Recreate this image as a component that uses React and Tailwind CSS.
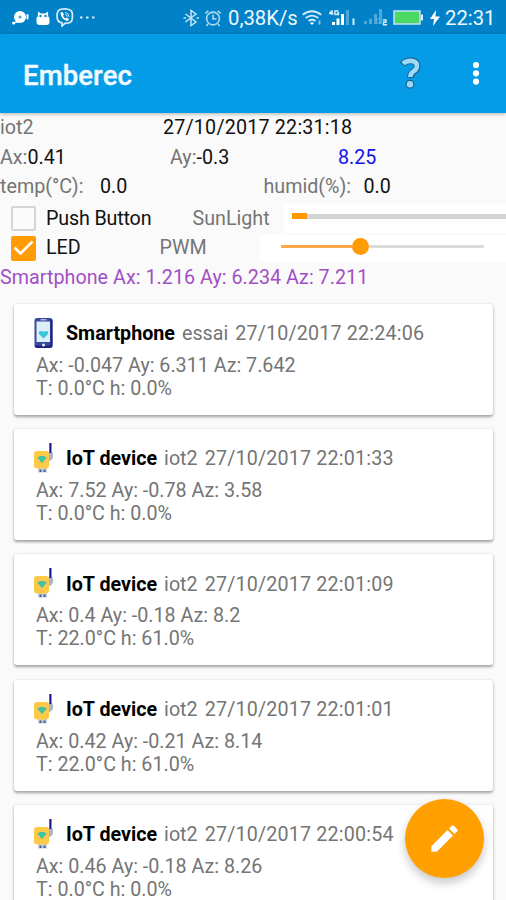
import { MdEdit } from "react-icons/md";

const records = [
  { id: 1, type: "phone", name: "Smartphone", source: "essai", date: "27/10/2017 22:24:06", accel: "Ax: -0.047 Ay: 6.311 Az: 7.642", climate: "T: 0.0°C h: 0.0%" },
  { id: 2, type: "iot", name: "IoT device", source: "iot2", date: "27/10/2017 22:01:33", accel: "Ax: 7.52 Ay: -0.78 Az: 3.58", climate: "T: 0.0°C h: 0.0%" },
  { id: 3, type: "iot", name: "IoT device", source: "iot2", date: "27/10/2017 22:01:09", accel: "Ax: 0.4 Ay: -0.18 Az: 8.2", climate: "T: 22.0°C h: 61.0%" },
  { id: 4, type: "iot", name: "IoT device", source: "iot2", date: "27/10/2017 22:01:01", accel: "Ax: 0.42 Ay: -0.21 Az: 8.14", climate: "T: 22.0°C h: 61.0%" },
  { id: 5, type: "iot", name: "IoT device", source: "iot2", date: "27/10/2017 22:00:54", accel: "Ax: 0.46 Ay: -0.18 Az: 8.26", climate: "T: 0.0°C h: 0.0%" },
];

function PhoneIcon() {
  return (
    <svg width="20" height="32" viewBox="0 0 20 32">
      <rect x="0.5" y="1" width="18" height="30" rx="2.5" fill="#3a4a9c" />
      <path d="M16.500 2q2 0 2 2v24q0 3-3 3h-12q-2 0-2.500-2.500h15.500z" fill="#1c2384" />
      <rect x="2.500" y="4.500" width="13.500" height="20.500" fill="#dceef7" />
      <path d="M9.500 21.500 5 17q-1-3 2-3 1.800 0 2.500 1 .7-1 2.500-1 3 0 2 3z" fill="#3cc6da" />
      <path d="M6.500 2.800h6" stroke="#c3cdec" strokeWidth="1.200" />
      <circle cx="9.500" cy="28" r="1.500" fill="#dfe8ff" />
    </svg>
  );
}

function DeviceIcon() {
  return (
    <svg width="20" height="32" viewBox="0 0 20 32">
      <path d="M14 10.500h4.500q1 2 .5 4.500-.5 3-5 4.500z" fill="#a9b4c4" />
      <rect x="15.300" y="1" width="2.200" height="10" fill="#1a1a8c" />
      <path d="M4 25h9v5.500H4z" fill="#c6d0de" />
      <path d="M5.500 27.500h2v2.500h-2zM9.500 27.500h2v2.500h-2z" fill="#4a5f96" />
      <rect x="0" y="9" width="15" height="17.500" rx="3" fill="#fdc947" />
      <path d="M3.200 15.500q4.800-3.700 9.600 0L8 21.300z" fill="#45c0a2" />
    </svg>
  );
}

/* Status bar glyphs */
function ChatIcon() {
  return (
    <svg width="18" height="16" viewBox="0 0 18 16" fill="#fff">
      <circle cx="8" cy="7" r="6" />
      <circle cx="1.700" cy="13" r="1.600" />
      <path d="M4 9.500 3 13l4-.5z" />
      <rect x="14.500" y="4" width="2" height="5.500" rx="1" />
      <circle cx="8" cy="7" r="1.500" fill="#4ba4da" />
    </svg>
  );
}

function RobotIcon() {
  return (
    <svg width="14" height="16" viewBox="0 0 14 16" fill="#fff">
      <path d="M1.800 6 2 1.500 5 3.500h4L12 1.500 12.200 6z" />
      <rect x="0.500" y="6" width="13" height="9" rx="3" />
      <circle cx="4.500" cy="6" r="1.200" fill="#0a82c8" />
      <circle cx="9.500" cy="6" r="1.200" fill="#0a82c8" />
    </svg>
  );
}

function ViberIcon() {
  return (
    <svg width="19" height="19" viewBox="0 0 19 19" fill="none" stroke="#d5ecf9">
      <path d="M5 1.500q4.500-1.200 9 0 3 .8 3.300 4 .4 3.500-.3 6.500-.8 2.700-4 3l-3 .3L7 18v-3.200q-3.700-.5-4.500-3.300-.8-3-.2-6Q2.700 2.300 5 1.500z" strokeWidth="1.700" />
      <path d="M5.500 4.500q0 6.500 7 8.700l1.700-1.900-2.500-1.700-1.200.9Q8.700 9.500 8 7.700l1-1.100L7.500 4z" fill="#fff" stroke="none" />
      <path d="M10 4.500q3.700.4 4 4.300M10.300 6.500q1.600.3 1.800 2.200" strokeWidth="1" />
    </svg>
  );
}

function AlarmIcon() {
  return (
    <svg width="18" height="18" viewBox="0 0 18 18" fill="none" stroke="#b0d8ef" strokeWidth="1.600">
      <circle cx="9" cy="9.500" r="6.400" />
      <path d="M9 5.500V10h3.500M1.300 4.500l3-2.700M16.700 4.500l-3-2.700M4 15l-1.500 2M14 15l1.500 2" />
    </svg>
  );
}

function WifiIcon() {
  return (
    <svg width="21" height="16" viewBox="0 0 21 16" fill="none" stroke="#d5ecf9" strokeWidth="1.900">
      <path d="M.8 4.800q9-7 18.400 0M3.700 8q6.300-4.700 12.600 0M6.500 11q3.500-2.500 7 0" />
      <path d="M8 13q2-1.400 4 0l-2 2z" fill="#fff" stroke="none" />
      <path d="M17.500 10.500v4" strokeWidth="2" stroke="#84c1e4" />
    </svg>
  );
}

function SignalIcon() {
  return (
    <svg width="27" height="16" viewBox="0 0 27 16">
      <path d="M.500 3 3 .800V5M0 3.500h4.500M9.500 1H6v3.500h3.500V3H8" fill="none" stroke="#d5ecf9" strokeWidth="1.400" />
      <path d="M3 12h3v3H3zM7.500 8.500h3V15h-3zM12 4h3v11h-3z" fill="#fff" />
      <path d="M17 0h3v15h-3z" fill="#4fa7d9" />
      <path d="M23.500 8.500h2V15h-2z" fill="#d5ecf9" />
    </svg>
  );
}

function WeakSignalIcon() {
  return (
    <svg width="24" height="17" viewBox="0 0 24 17">
      <path d="M0 12h3v3H0zM5 9.500h3V15H5zM10 5h3v10h-3zM15 0h3v15h-3z" fill="#4fa7d9" />
      <path d="M16.500 10h-4v4h3.500v-2" fill="none" stroke="#65b3de" />
      <path d="M18.800 11h3.200v2.300h-2.500v2.500h3.500" fill="none" stroke="#d5ecf9" strokeWidth="1.400" />
    </svg>
  );
}

function StatusBar() {
  return (
    <div className="flex h-[33.5px] items-center bg-[#0182c8] pt-0.5 pl-3 text-[20.3px] text-[#eef8fe]">
      <ChatIcon />
      <span className="ml-[6px]"><RobotIcon /></span>
      <span className="ml-[5px]"><ViberIcon /></span>
      <svg className="ml-[6px]" width="15" height="3" viewBox="0 0 15 3" fill="#d5ecf9">
        <path d="M0 .5h2.500v2H0zM6 .5h2.500v2H6zM12 .5h2.500v2H12z" />
      </svg>
      <svg className="ml-[88px]" width="16" height="18" viewBox="0 0 16 18" fill="none" stroke="#c6e4f5" strokeWidth="1.500">
        <path d="m2.500 5 10.500 8L8 16.500v-15L13 5 2.500 13M.500 9H3M13.500 9H16" />
      </svg>
      <span className="ml-[5px]"><AlarmIcon /></span>
      <span className="ml-[6px] w-[70px] whitespace-nowrap">0,38K/s</span>
      <span className="ml-[4px]"><WifiIcon /></span>
      <span className="ml-[6px]"><SignalIcon /></span>
      <span className="ml-[8px]"><WeakSignalIcon /></span>
      <svg className="ml-[5px]" width="31" height="15" viewBox="0 0 31 15">
        <rect x="1" y="1" width="26" height="13" fill="#4bd964" stroke="#b9dff3" strokeWidth="1.600" />
        <path d="M28 4.500h2v6h-2z" fill="#d5ecf9" />
      </svg>
      <svg className="ml-[6px]" width="10" height="16" viewBox="0 0 10 16" fill="#fff">
        <path d="M6 0 0 9h4l-1 7 7-9.500H5.500z" />
      </svg>
      <span className="ml-[5px] whitespace-nowrap">22:31</span>
    </div>
  );
}

function AppBar() {
  return (
    <header className="relative z-10 flex h-[79.5px] items-center bg-[#049ce6] pl-[23px] shadow-[0_1px_4px_rgba(0,0,0,0.3)]">
      <h1 className="flex-1 pt-[4px] text-[27.5px] font-medium tracking-[0.1px] text-[#f2faff] [-webkit-text-stroke:0.4px_#f2faff]">Emberec</h1>
      <svg width="22" height="34" viewBox="0 0 22 34" fill="none">
        <path d="M2.500 8.500Q5 4.800 10.500 4.800 17.200 4.800 17.200 10.200q0 3-3.500 5.300-3.200 2.300-3.400 6.300" stroke="#1f5f88" strokeWidth="6.600" />
        <path d="M3.200 7.800Q5.500 4.900 10.500 4.900 17 4.900 17 10.200q0 2.800-3.500 5.100-3.200 2.200-3.200 5.700" stroke="#9bd9fa" strokeWidth="4.600" />
        <circle cx="10" cy="28.300" r="3.900" fill="#9bd9fa" stroke="#1f5f88" strokeWidth="1.200" />
      </svg>
      <svg className="mr-[26px] ml-[50px]" width="8" height="24" viewBox="0 0 8 24" fill="#fff">
        <circle cx="4" cy="4" r="3.100" />
        <circle cx="4" cy="12.300" r="3.100" />
        <circle cx="4" cy="20.600" r="3.100" />
      </svg>
    </header>
  );
}

function Readings() {
  return (
    <section className="text-[19.7px] leading-[29.6px] whitespace-nowrap text-[#111]">
      <div className="flex h-[29.6px]">
        <span className="w-[163px] text-[#757575]">iot2</span>
        <span className="tracking-[0.2px]">27/10/2017 22:31:18</span>
      </div>
      <div className="flex h-[29.6px]">
        <span className="w-[170px]"><span className="text-[#757575]">Ax:</span>0.41</span>
        <span className="w-[168px]"><span className="text-[#757575]">Ay:</span>-0.3</span>
        <span className="text-[#1414e6]">8.25</span>
      </div>
      <div className="flex h-[29.6px]">
        <span className="w-[100px] text-[#757575]">temp(°C):</span>
        <span className="w-[163.5px]">0.0</span>
        <span className="w-[100px] text-[#757575]">humid(%):</span>
        <span>0.0</span>
      </div>
      <div className="mt-[2px] flex h-[29.6px] items-center">
        <span className="ml-[11px] size-[25px] rounded-[2px] border-2 border-[#d5d5d5]" />
        <span className="ml-[10px] w-[146.5px] tracking-[-0.15px]">Push Button</span>
        <span className="w-[91.5px] text-[#757575]">SunLight</span>
        <span className="flex h-[29px] flex-1 items-center bg-white pb-[5px]">
          <span className="ml-[8px] h-[6px] w-[15px] bg-[#ff9800]" />
          <span className="h-[5px] flex-1 bg-[#d3d3d3]" />
        </span>
      </div>
      <div className="flex h-[29.6px] items-center">
        <span className="ml-[11px] flex size-[25px] items-center justify-center rounded-[2px] bg-[#ff9b05]">
          <svg width="21" height="18" viewBox="0 0 21 18" fill="none" stroke="#fff" strokeWidth="2.600">
            <path d="m1.500 8.500 6 6L19.500 2.500" />
          </svg>
        </span>
        <span className="ml-[10px] w-[113.5px]">LED</span>
        <span className="w-[100.500px] text-[#757575]">PWM</span>
        <span className="flex h-[27px] flex-1 items-center bg-white pb-[3px]">
          <span className="ml-[21px] h-[3px] w-[71px] bg-[#ffa54a]" />
          <span className="size-[17px] rounded-full bg-[#ff9b05]" />
          <span className="h-[3px] w-[115px] bg-[#dcdcdc]" />
        </span>
      </div>
      <div className="h-[29.6px] tracking-[0.04px] text-[#a14fc4]">Smartphone Ax: 1.216 Ay: 6.234 Az: 7.211</div>
    </section>
  );
}

function RecordCard({ record }) {
  return (
    <article className="h-[111px] shrink-0 rounded-[3px] bg-white pt-[13px] pl-5 text-[19.7px] whitespace-nowrap text-[#757575] shadow-[0_1.5px_3px_rgba(0,0,0,0.36)]">
      <div className="flex h-8 items-center">
        {record.type === "phone" ? <PhoneIcon /> : <DeviceIcon />}
        <h2 className="ml-3 pt-[2px] font-bold text-black">{record.name}</h2>
        <span className="ml-[7px] pt-[2px]">{record.source}</span>
        <span className="ml-[7px] pt-[2px] tracking-[0.18px]">{record.date}</span>
      </div>
      <p className="mt-[5px] pl-[2px] leading-[23px]">{record.accel}</p>
      <p className="pl-[2px] leading-[23px]">{record.climate}</p>
    </article>
  );
}

export default function App() {
  return (
    <div className="relative h-[900px] w-[506px] overflow-hidden bg-[#fafafa] font-[Roboto,'Liberation_Sans',sans-serif]">
      <StatusBar />
      <AppBar />
      <Readings />
      <main className="mt-[11.5px] flex flex-col gap-[14.2px] pr-[13px] pl-[14px]">
        {records.map((record) => (
          <RecordCard key={record.id} record={record} />
        ))}
      </main>
      <button
        aria-label="Edit"
        className="absolute right-[22px] bottom-[22px] flex size-[79px] items-center justify-center rounded-full bg-[#ffa000] shadow-[0_5px_10px_rgba(0,0,0,0.22)]"
      >
        <MdEdit className="size-[35px] text-white" />
      </button>
    </div>
  );
}
